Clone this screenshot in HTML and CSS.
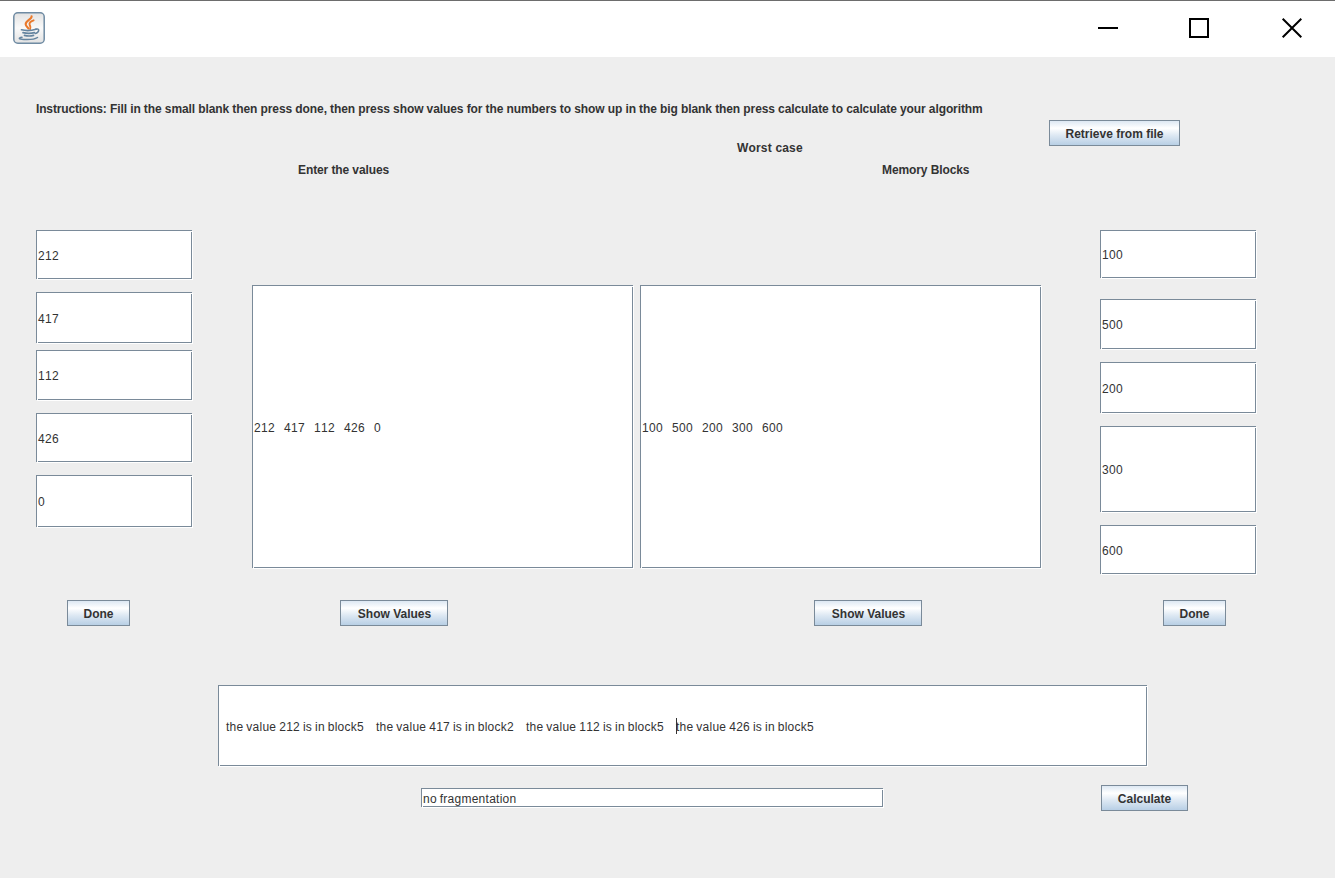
FILE: index.html
```html
<!DOCTYPE html>
<html lang="en">
<head>
<meta charset="utf-8">
<title>Worst case</title>
<link rel="stylesheet" href="styles.css">
</head>
<body>
<header class="titlebar">
  <svg class="app-icon" width="32" height="32" viewBox="0 0 32 32">
    <defs><linearGradient id="face" x1="0" y1="0" x2="0" y2="1"><stop offset="0" stop-color="#e2e2e2"/><stop offset=".5" stop-color="#fafafa"/><stop offset="1" stop-color="#e2e2e2"/></linearGradient></defs>
    <rect x=".8" y=".8" width="30.4" height="30.4" rx="4" fill="url(#face)" stroke="#6f8ba3" stroke-width="1.5"/>
    <g fill="none" stroke="#ea7a2c" stroke-linecap="round">
      <path d="M18.600 4.300c.4 3-6.300 4.400-5.900 8 .2 1.800 1.900 2.700 2.700 4.200" stroke-width="2.100"/>
      <path d="M20.600 8.300c-2.900 1-4.500 2.600-4 4.400.4 1.400 1.600 2.300.5 4.300" stroke-width="1.900"/>
    </g>
    <g fill="none" stroke="#64849f" stroke-linecap="round">
      <path d="M8.500 17.800c4 1 10.500.7 14.500-.6" stroke-width="1.700"/>
      <path d="M22.800 17.200c4-1.300 3.900 3-.6 4.400" stroke-width="1.500"/>
      <path d="M10 20.600c3.500.9 8.500.8 11.500 0M11.500 23.400c3 .8 6.500.7 9 0" stroke-width="1.700"/>
      <path d="M9 25.300c-4 .8-3.500 1.900 1.800 2.200 5.500.3 11.200-.3 13.700-2" stroke-width="1.500"/>
    </g>
  </svg>
  <svg class="controls" width="204" height="22" viewBox="0 0 204 22" fill="none" stroke="#000" stroke-width="2">
    <path d="M0 11h20"/>
    <rect x="92" y="2" width="18" height="18"/>
    <path d="M184.700 1.700l18.600 18.600M203.300 1.700l-18.600 18.600"/>
  </svg>
</header>

<section class="heading">
  <div class="captions">
    <p class="label instructions"><span class="lead">Instructions:</span> Fill in the small blank then press done, then press show values for the numbers to show up in the big blank then press calculate to calculate your algorithm</p>
    <p class="label mode">Worst case</p>
    <div class="column-titles"><span class="label">Enter the values</span><span class="label">Memory Blocks</span></div>
  </div>
  <button class="btn retrieve">Retrieve from file</button>
</section>

<main class="board">
  <div class="stack values">
    <div class="field">212</div>
    <div class="field">417</div>
    <div class="field">112</div>
    <div class="field">426</div>
    <div class="field">0</div>
  </div>
  <div class="field pane pane-values">212   417   112   426   0</div>
  <div class="field pane pane-blocks">100   500   200   300   600</div>
  <div class="stack blocks">
    <div class="field">100</div>
    <div class="field">500</div>
    <div class="field">200</div>
    <div class="field">300</div>
    <div class="field">600</div>
  </div>
</main>

<div class="actions">
  <button class="btn done">Done</button>
  <button class="btn show show-values">Show Values</button>
  <button class="btn show show-blocks">Show Values</button>
  <button class="btn done done-blocks">Done</button>
</div>

<div class="field output"><span>the value 212 is in block5</span><span>the value 417 is in block2</span><span>the value 112 is in block5</span><span class="at-caret">the value 426 is in block5</span></div>

<footer class="result">
  <div class="field fragmentation">no fragmentation</div>
  <button class="btn calculate">Calculate</button>
</footer>
</body>
</html>
```
FILE: styles.css
```css
* { box-sizing: border-box; }
body {
  margin: 0;
  width: 1335px;
  height: 878px;
  overflow: hidden;
  background: #eee;
  color: #333;
  font: 12px/15px "Liberation Sans", Arial, sans-serif;
  font-kerning: none;
}
p { margin: 0; }

.titlebar {
  display: flex;
  justify-content: space-between;
  height: 57px;
  padding: 11px 33px 0 13px;
  background: #fff;
  border-top: 1px solid #6d6d6d;
}
.controls { margin-top: 5px; }

.heading { display: flex; height: 173px; }
.captions { width: 1049px; padding-top: 45px; }
.label { font-weight: bold; white-space: nowrap; letter-spacing: -.1px; }
.instructions { margin-left: 36px; letter-spacing: -.095px; }
.lead { letter-spacing: -.15px; }
.mode { margin: 24px 0 0 737px; letter-spacing: .18px; }
.column-titles { display: flex; margin-top: 7px; padding-left: 298px; }
.column-titles .label:first-child { width: 584px; }

.btn {
  height: 26px;
  padding: 2px 0 0;
  border: 1px solid #7a8a99;
  border-radius: 0;
  background: linear-gradient(#dde8f3, #fff 30%, #dde8f3 60%, #b8cfe5);
  color: #333;
  font: bold 12px/15px "Liberation Sans", Arial, sans-serif;
}
.show { padding-left: 1px; }
.retrieve { width: 131px; margin-top: 63px; }

/* Etched border: dark edge lines with a light line to the lower right. */
.field {
  display: flex;
  align-items: center;
  padding: 3px 2px 0;
  background:
    linear-gradient(#7a8a99, #7a8a99) 0 0 / 100% 1px no-repeat,
    linear-gradient(#7a8a99, #7a8a99) 0 0 / 1px 100% no-repeat,
    linear-gradient(#7a8a99, #7a8a99) 100% 2px / 1px 100% no-repeat,
    linear-gradient(#7a8a99, #7a8a99) 2px 100% / 100% 1px no-repeat,
    #fff;
  box-shadow: 1px 1px #fff;
  white-space: pre;
  letter-spacing: .33px;
  word-spacing: -.66px;
}

.board { display: flex; height: 370px; padding-left: 36px; }
.pane { height: 283px; margin-top: 55px; }
.pane-values { width: 381px; margin-left: 60px; }
.pane-blocks { width: 401px; margin-left: 7px; }

/* Field heights and gaps differ from row to row. */
.stack { display: flex; flex-direction: column; width: 156px; }
.stack .field { flex: none; height: 49px; margin-bottom: 13px; }
.blocks { margin-left: 59px; }
.values .field:nth-child(2) { height: 51px; margin-bottom: 7px; }
.values .field:nth-child(3) { height: 50px; }
.values .field:nth-child(5) { height: 52px; }
.blocks .field:nth-child(1) { height: 48px; margin-bottom: 21px; }
.blocks .field:nth-child(2) { height: 50px; }
.blocks .field:nth-child(3) { height: 51px; }
.blocks .field:nth-child(4) { height: 86px; }

.actions { display: flex; height: 85px; padding-left: 67px; }
.done { width: 63px; }
.show { width: 108px; }
.show-values { margin-left: 210px; }
.show-blocks { margin-left: 366px; }
.done-blocks { margin-left: 241px; }

.output { width: 929px; height: 81px; margin-left: 218px; padding: 4px 0 0 8px; }
.output, .fragmentation { letter-spacing: .25px; }
.output span { width: 150px; }
.at-caret { position: relative; }
.at-caret::before {
  content: "";
  position: absolute;
  left: 0;
  top: -2px;
  width: 1px;
  height: 16px;
  background: #333;
}

.result { display: flex; padding: 19px 0 0 421px; }
.fragmentation { width: 462px; height: 19px; margin-top: 3px; }
.calculate { width: 87px; margin-left: 218px; }
```
